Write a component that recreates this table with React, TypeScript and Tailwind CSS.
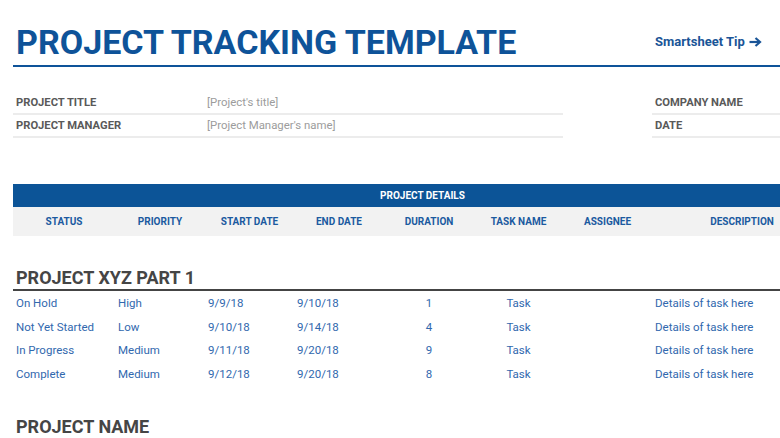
import React from "react";

const cols = "grid grid-cols-[102px_90px_89px_90px_90px_89px_89px_180px]";

const rows = [
  { status: "On Hold", priority: "High", start: "9/9/18", end: "9/10/18", dur: "1", task: "Task", desc: "Details of task here" },
  { status: "Not Yet Started", priority: "Low", start: "9/10/18", end: "9/14/18", dur: "4", task: "Task", desc: "Details of task here" },
  { status: "In Progress", priority: "Medium", start: "9/11/18", end: "9/20/18", dur: "9", task: "Task", desc: "Details of task here" },
  { status: "Complete", priority: "Medium", start: "9/12/18", end: "9/20/18", dur: "8", task: "Task", desc: "Details of task here" },
];

const headers = ["STATUS", "PRIORITY", "START DATE", "END DATE", "DURATION", "TASK NAME", "ASSIGNEE", "DESCRIPTION"];

export default function App() {
  return (
    <div className="relative w-[780px] h-[438px] overflow-hidden bg-white font-['Roboto',_'Liberation_Sans',_sans-serif]">
      <div className="ml-[13px] w-[819px]">
        {/* Title row */}
        <div className={`${cols} h-[67px] border-b-2 border-[#0e5399]`}>
          <div className="col-span-7 pl-[3px] pt-[25px] text-[34px] font-bold leading-none text-[#0e5399] whitespace-nowrap">
            PROJECT TRACKING TEMPLATE
          </div>
          <div className="pl-[3px] pt-[34px] flex items-start gap-[4px] text-[13px] leading-[16px] font-bold text-[#1a5597] whitespace-nowrap">
            <span>Smartsheet Tip</span>
            <svg width="13" height="10" viewBox="0 0 13 10" className="mt-[3px]">
              <path d="M0.5 5 H10" stroke="#1a5597" strokeWidth="2.2" />
              <path d="M6.5 1 L11 5 L6.5 9" fill="none" stroke="#1a5597" strokeWidth="2.2" strokeLinejoin="miter" />
            </svg>
          </div>
        </div>

        {/* Info rows */}
        <div className="mt-[25px]">
          {[
            ["PROJECT TITLE", "[Project's title]", "COMPANY NAME"],
            ["PROJECT MANAGER", "[Project Manager's name]", "DATE"],
          ].map(([label, value, right]) => (
            <div key={label} className={`${cols} h-[23px] leading-[21px]`}>
              <div className="col-span-2 pl-[3px] border-b-2 border-[#ececec] text-[11.2px] font-bold text-[#595959] whitespace-nowrap">{label}</div>
              <div className="col-span-4 pl-[2px] border-b-2 border-[#ececec] text-[11.4px] text-[#9c9c9c] whitespace-nowrap">{value}</div>
              <div />
              <div className="pl-[3px] border-b-2 border-[#ececec] text-[11.2px] font-bold text-[#595959] whitespace-nowrap">{right}</div>
            </div>
          ))}
        </div>

        {/* Project details band */}
        <div className="mt-[46px] h-[23px] bg-[#0c5497] flex items-center justify-center text-[10px] font-bold text-white">
          PROJECT DETAILS
        </div>
        <div className={`${cols} h-[29px] bg-[#f2f2f2]`}>
          {headers.map((h) => (
            <div key={h} className="flex items-center justify-center text-[10px] font-bold text-[#1b5aa0] whitespace-nowrap">
              {h}
            </div>
          ))}
        </div>

        {/* Section 1 */}
        <div className="mt-[31px] h-[24px] border-b-2 border-[#444444] pl-[3px] text-[18px] leading-[22px] font-bold text-[#454545]">
          PROJECT XYZ PART 1
        </div>
        <div className="pt-[1px]">
          {rows.map((r, i) => (
            <div key={i} className={`${cols} h-[23.7px] text-[11.5px] leading-[23.7px] text-[#3168ae] whitespace-nowrap`}>
              <div className="pl-[3px]">{r.status}</div>
              <div className="pl-[3px]">{r.priority}</div>
              <div className="pl-[3px]">{r.start}</div>
              <div className="pl-[3px]">{r.end}</div>
              <div className="text-center">{r.dur}</div>
              <div className="text-center">{r.task}</div>
              <div />
              <div className="pl-[3px]">{r.desc}</div>
            </div>
          ))}
        </div>

        {/* Section 2 */}
        <div className="mt-[29px] h-[24px] border-b-2 border-[#444444] pl-[3px] text-[18px] leading-[22px] font-bold text-[#454545]">
          PROJECT NAME
        </div>
      </div>
    </div>
  );
}
